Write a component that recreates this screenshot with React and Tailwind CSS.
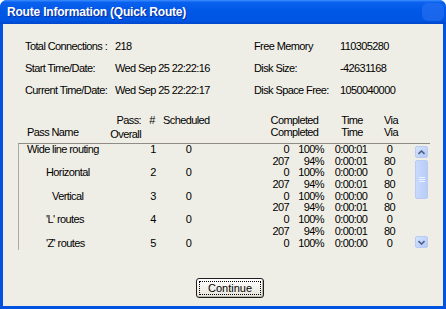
import React from 'react';

const rows = [
  { name: 'Wide line routing', indent: 'pl-[8px]', n: 1, lines: [['0', '100%', '0:00:01', '0'], ['207', '94%', '0:00:01', '80']] },
  { name: 'Horizontal', indent: 'pl-[27px]', n: 2, lines: [['0', '100%', '0:00:00', '0'], ['207', '94%', '0:00:01', '80']] },
  { name: 'Vertical', indent: 'pl-[33px]', n: 3, lines: [['0', '100%', '0:00:00', '0'], ['207', '94%', '0:00:01', '80']] },
  { name: "'L' routes", indent: 'pl-[27px]', n: 4, lines: [['0', '100%', '0:00:00', '0'], ['207', '94%', '0:00:01', '80']] },
  { name: "'Z' routes", indent: 'pl-[27px]', n: 5, lines: [['0', '100%', '0:00:00', '0']] },
];

const ScrollButton = ({ down }) => (
  <div className="h-[12px] w-[13px] rounded-[2px] border border-[#B9CBF3] bg-gradient-to-br from-[#D5E3FF] to-[#B2C9F7] flex items-center justify-center">
    <svg width="7" height="5" viewBox="0 0 7 5">
      <path d={down ? 'M0.5 1 L3.5 4 L6.5 1' : 'M0.5 4 L3.5 1 L6.5 4'} fill="none" stroke="#4D6185" strokeWidth="1.6" />
    </svg>
  </div>
);

const InfoRow = ({ label, value, w }) => (
  <div className="flex h-[22px] items-center">
    <span className={w}>{label}</span>
    <span>{value}</span>
  </div>
);

export default function App() {
  return (
    <div className="w-[446px] h-[309px] flex flex-col bg-[#0053E1] rounded-t-[7px] overflow-hidden">
      {/* title bar */}
      <div className="relative h-[24px] shrink-0 flex items-center pl-[7px] bg-[linear-gradient(180deg,#3B8DFF_0%,#0A61EE_10%,#0058E7_45%,#0055E3_85%,#0046CC_100%)]">
        <span className="text-white font-bold text-[12px] tracking-[-0.2px] [font-family:'Liberation_Sans',Arial,sans-serif] [text-shadow:1px_1px_0_#0A2A9A]">
          Route Information (Quick Route)
        </span>
        <div className="absolute right-[2px] top-[3px] w-[22px] h-[18px] rounded-[6px] bg-[#2A72F0] opacity-60" />
      </div>

      {/* body */}
      <div className="flex-1 mx-[3px] mb-[3px] bg-[#EFEEE6] text-black text-[11px] tracking-[-0.6px] [font-family:'Liberation_Sans',Arial,sans-serif] flex flex-col">
        {/* info */}
        <div className="flex pt-[11px] pl-[22px]">
          <div className="w-[229px]">
            <InfoRow label="Total Connections :" value="218" w="w-[90px]" />
            <InfoRow label="Start Time/Date:" value="Wed Sep 25 22:22:16" w="w-[90px]" />
            <InfoRow label="Current Time/Date:" value="Wed Sep 25 22:22:17" w="w-[90px]" />
          </div>
          <div>
            <InfoRow label="Free Memory" value="110305280" w="w-[86px]" />
            <InfoRow label="Disk Size:" value="-42631168" w="w-[86px]" />
            <InfoRow label="Disk Space Free:" value="1050040000" w="w-[86px]" />
          </div>
        </div>

        {/* header */}
        <div className="flex mt-[13px] pl-[15px] leading-[12px] h-[24px]">
          <div className="w-[87px] pl-[9px] pt-[12px]">Pass Name</div>
          <div className="w-[36px] text-right">
            <div>Pass:</div>
            <div className="pt-[2px]">Overall</div>
          </div>
          <div className="w-[22px] text-center">#</div>
          <div className="w-[99px]">Scheduled</div>
          <div className="w-[65px] text-center">
            <div>Completed</div>
            <div>Completed</div>
          </div>
          <div className="w-[50px] text-center">
            <div>Time</div>
            <div>Time</div>
          </div>
          <div className="w-[28px] text-center">
            <div>Via</div>
            <div>Via</div>
          </div>
        </div>

        {/* list */}
        <div className="mt-[5px] ml-[15px] w-[412px] h-[107px] flex border-t border-t-[#8E8C84] border-l border-l-[#ACAAA2] overflow-hidden">
          <div className="flex-1 overflow-hidden">
            {rows.map((r) => (
              <div key={r.n} className="flex h-[23.4px] leading-[11.7px]">
                <div className={`w-[87px] ${r.indent} whitespace-nowrap`}>{r.name}</div>
                <div className="w-[36px]" />
                <div className="w-[22px] text-center">{r.n}</div>
                <div className="w-[49px] text-center">0</div>
                <div>
                  {r.lines.map((l, i) => (
                    <div key={i} className="flex">
                      <div className="w-[78px] text-right pr-[2px]">{l[0]}</div>
                      <div className="w-[33px] text-right">{l[1]}</div>
                      <div className="w-[54px] text-center">{l[2]}</div>
                      <div className="w-[23px] text-center">{l[3]}</div>
                    </div>
                  ))}
                </div>
              </div>
            ))}
          </div>
          <div className="w-[13px] mr-[2px] mt-[2px] mb-[2px] flex flex-col">
            <ScrollButton />
            <div className="mt-[2px] h-[39px] rounded-[2px] border border-[#B9CBF3] bg-gradient-to-r from-[#C9DAFD] to-[#B7CCF8] flex flex-col items-center justify-center gap-[1px]">
              <div className="w-[6px] h-px bg-[#EEF3FF]" />
              <div className="w-[6px] h-px bg-[#EEF3FF]" />
              <div className="w-[6px] h-px bg-[#EEF3FF]" />
            </div>
            <div className="flex-1" />
            <ScrollButton down />
          </div>
        </div>

        {/* button */}
        <div className="mt-[28px] ml-[193px]">
          <button className="w-[68px] h-[20px] rounded-[3px] border border-[#1E1E1E] bg-gradient-to-b from-[#FFFFFF] to-[#E6E4DA] shadow-[inset_-1px_-1px_0_#BDBBB0] p-[2px] tracking-normal">
            <div className="w-full h-full border border-dotted border-black flex items-center justify-center leading-none">
              Continue
            </div>
          </button>
        </div>
      </div>
    </div>
  );
}
